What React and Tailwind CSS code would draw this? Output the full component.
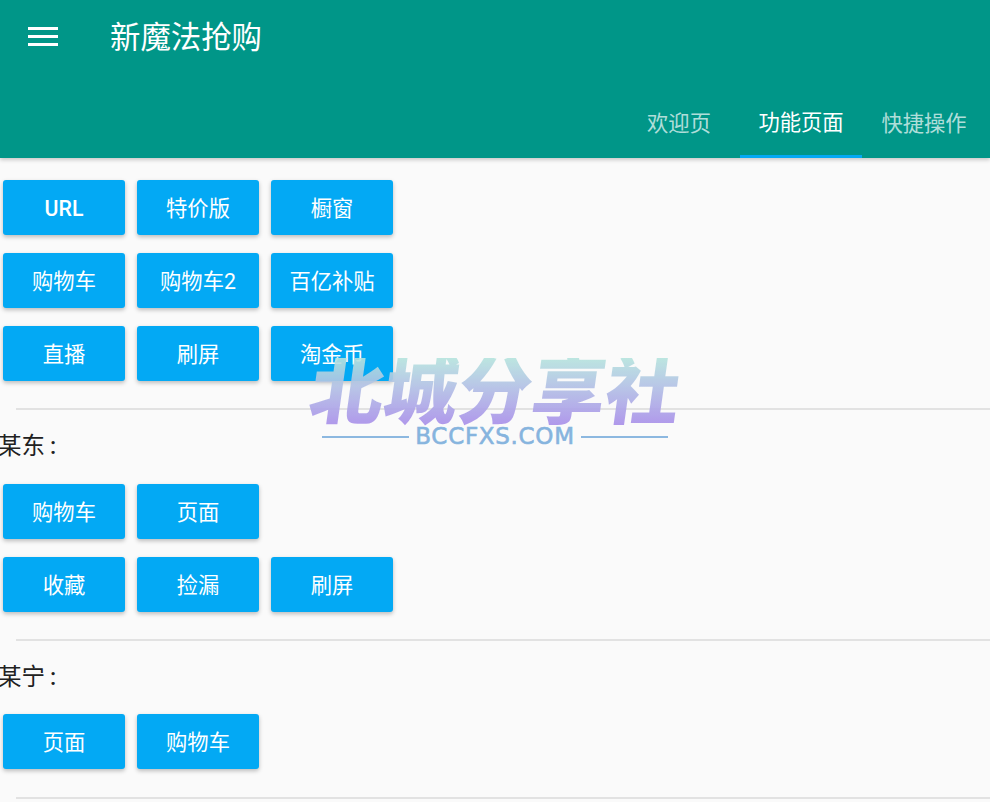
import React from "react";

const font = { fontFamily: "Roboto, 'Noto Sans CJK SC', sans-serif" };

const sections = [
  {
    rows: [
      ["URL", "特价版", "橱窗"],
      ["购物车", "购物车2", "百亿补贴"],
      ["直播", "刷屏", "淘金币"],
    ],
  },
  {
    label: "某东",
    rows: [
      ["购物车", "页面"],
      ["收藏", "捡漏", "刷屏"],
    ],
  },
  {
    label: "某宁",
    tight: true,
    rows: [["页面", "购物车"]],
  },
];

const Btn = ({ text }) => (
  <button
    className={`w-[122px] h-[55px] pt-[2px] rounded-[3px] bg-[#03a9f4] text-white text-[21.3px] leading-none flex items-center justify-center shadow-[0_2px_4px_rgba(0,0,0,0.25)] ${
      text === "URL" ? "font-medium" : "font-normal"
    }`}>
    {text}
  </button>
);

const Section = ({ label, rows, tight }) => (
  <div>
    {label && (
      <div
        className={`h-[34px] mt-[20px] -ml-[2px] flex items-center text-[23.5px] leading-none text-[#212121] ${
          tight ? "mb-[19px]" : "mb-[20px]"
        }`}>
        {label}
        <span className="ml-[5px] font-medium">:</span>
      </div>
    )}
    <div className="flex flex-col gap-[18px] pl-[3px]">
      {rows.map((row, i) => (
        <div key={i} className="flex gap-3">
          {row.map((t, j) => (
            <Btn key={j} text={t} />
          ))}
        </div>
      ))}
    </div>
    <div className={`h-[2px] ml-[16px] bg-[#e2e2e2] ${tight ? "mt-[28px]" : "mt-[27px]"}`} />
  </div>
);

export default function App() {
  return (
    <div style={font} className="relative w-[990px] h-[802px] overflow-hidden bg-[#fafafa]">
      <header className="h-[158px] bg-[#009688] flex flex-col justify-between shadow-[0_2px_4px_rgba(0,0,0,0.2)]">
        <div className="flex items-center h-[74px] pl-[28px]">
          <svg width="30" height="22" viewBox="0 0 30 22" className="shrink-0 -translate-y-[1px]">
            <path d="M0 2h30v3H0zM0 10h30v3H0zM0 18h30v3H0z" fill="#fff" />
          </svg>
          <h1 className="ml-[52px] pt-[2px] text-[30.4px] font-normal leading-none text-white">新魔法抢购</h1>
        </div>
        <nav className="flex justify-end h-[74px] text-[21.3px] leading-none">
          <div className="w-[122px] flex items-center justify-center text-white/70 pt-[6px]">欢迎页</div>
          <div className="w-[122px] flex items-center justify-center text-white pt-[6px] border-b-[3px] border-[#03a9f4]">
            功能页面
          </div>
          <div className="w-[128px] flex items-center justify-center text-white/70 pt-[6px] pr-[4px]">快捷操作</div>
        </nav>
      </header>

      <main className="pt-[22px]">
        {sections.map((s, i) => (
          <Section key={i} label={s.label} rows={s.rows} tight={s.tight} />
        ))}
      </main>

      {/* watermark */}
      <div className="absolute left-[305px] top-[358px] w-[380px] flex flex-col items-center pointer-events-none">
        <div className="h-[70px] flex items-center text-[74px] leading-none font-black -skew-x-[8deg] whitespace-nowrap text-transparent bg-clip-text bg-gradient-to-b from-[#b6e4de] to-[#a88aea] opacity-90">
          北城分享社
        </div>
        <div className="flex items-center gap-[6px] -mt-[3px]">
          <div className="w-[87px] h-[2px] bg-[#8cb8e0]" />
          <span
            style={{ fontFamily: "'DejaVu Sans', sans-serif" }}
            className="text-[23px] leading-none tracking-[0.7px] text-[#86b4de] [-webkit-text-stroke:0.6px_#86b4de]">
            BCCFXS.COM
          </span>
          <div className="w-[87px] h-[2px] bg-[#8cb8e0]" />
        </div>
      </div>
    </div>
  );
}
